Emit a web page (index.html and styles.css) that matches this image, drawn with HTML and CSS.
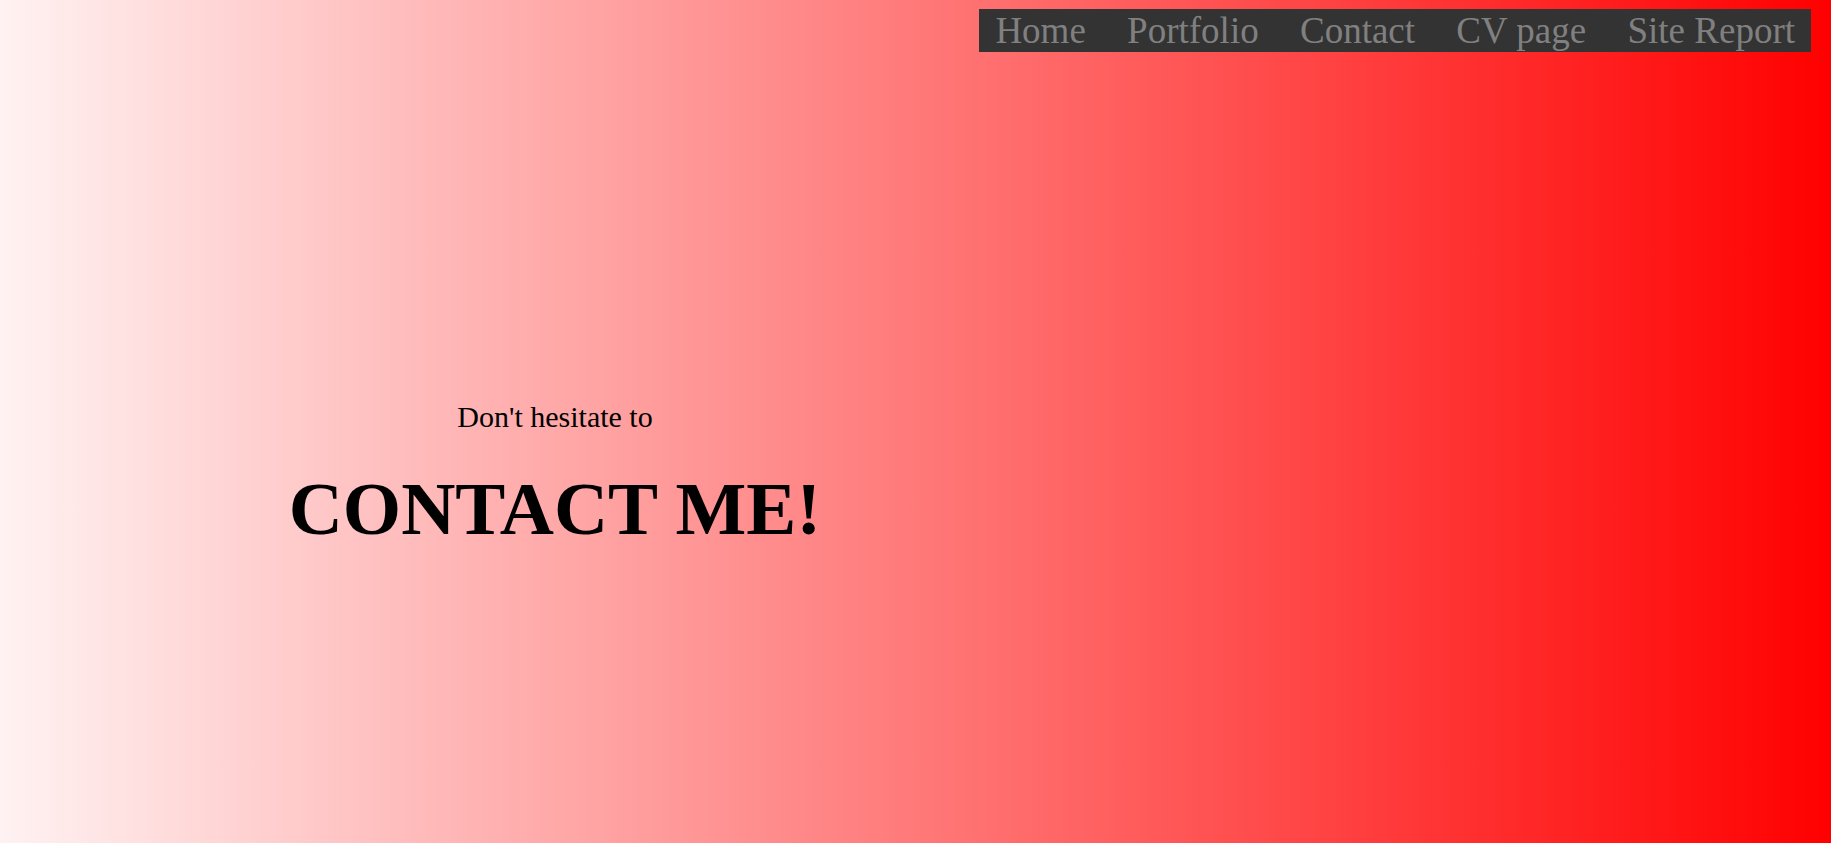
FILE: index.html
```html
<!DOCTYPE html>
<html lang="en">
<head>
<meta charset="utf-8">
<title>Contact</title>
<link rel="stylesheet" href="styles.css">
</head>
<body>
<header class="top">
  <nav class="menu">
    <a class="menu-link" href="#">Home</a>
    <a class="menu-link" href="#">Portfolio</a>
    <a class="menu-link" href="#">Contact</a>
    <a class="menu-link" href="#">CV page</a>
    <a class="menu-link" href="#">Site Report</a>
  </nav>
</header>
<main class="hero">
  <p class="lead">Don't hesitate to</p>
  <h1 class="title">CONTACT ME!</h1>
</main>
</body>
</html>
```

FILE: styles.css
```css
html, body {
  margin: 0;
  padding: 0;
  height: 100%;
}
body {
  background: linear-gradient(to right, #fff2f2, #ff0000);
  font-family: "Liberation Serif", "Times New Roman", serif;
  color: #000;
  overflow: hidden;
}
.top {
  display: flex;
  justify-content: flex-end;
  padding: 9px 20px 0 0;
}
.menu {
  display: flex;
  gap: 9.3px;
  background: #333333;
}
.menu-link {
  display: block;
  padding: 0 16px;
  font-size: 37px;
  line-height: 43px;
  color: #808080;
  text-decoration: none;
}
.hero {
  width: 1110px;
  padding-top: 348px;
  text-align: center;
}
.lead {
  margin: 0;
  font-size: 30px;
  line-height: 34px;
}
.title {
  margin: 32px 0 0;
  font-size: 75px;
  line-height: 85px;
  font-weight: bold;
}
```
